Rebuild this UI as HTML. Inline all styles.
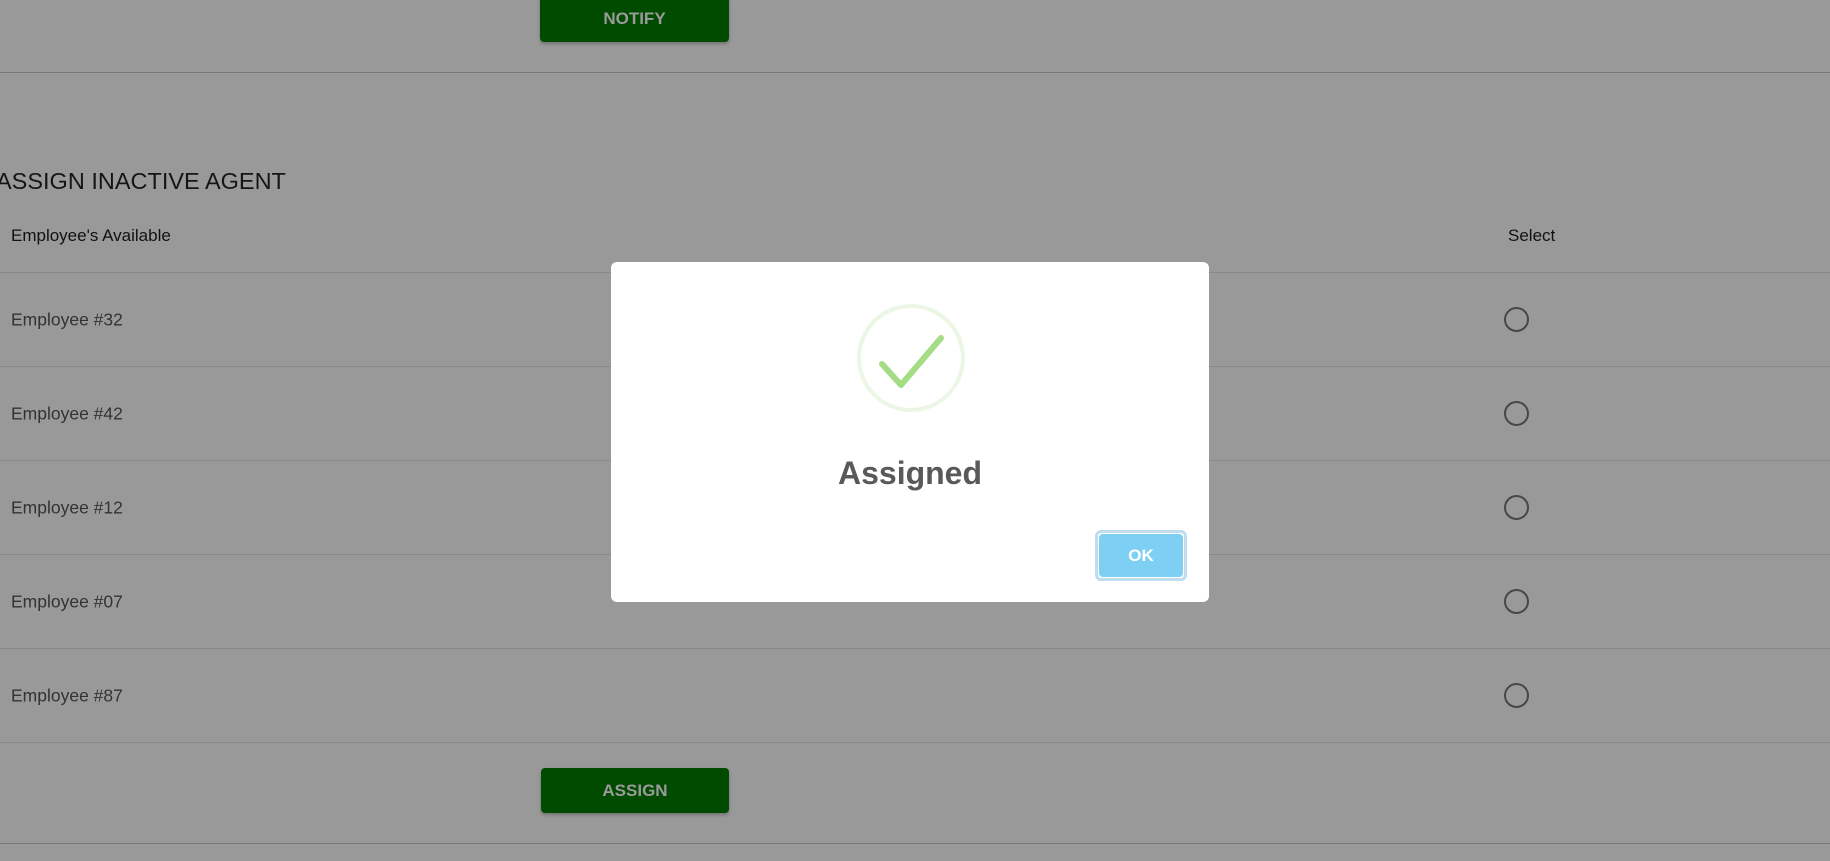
<!DOCTYPE html>
<html><head><meta charset="utf-8"><style>
*{margin:0;padding:0;box-sizing:border-box}
body{width:1830px;height:861px;overflow:hidden;background:#999;font-family:"Liberation Sans",Roboto,sans-serif;position:relative}
.abs{position:absolute}
.btn{background:#004b00;color:#9a9a9a;font-weight:bold;font-size:17px;display:flex;align-items:center;justify-content:center;border-radius:4px;box-shadow:0 2px 3px rgba(0,0,0,.25)}
.line{left:0;width:1830px;height:1px;background:#888}
.row{left:11px;font-size:17.5px;color:#333;transform:translateY(-50%)}
.radio{left:1504px;width:25px;height:25px;border:2.5px solid #474747;border-radius:50%}
</style></head><body>
<div class="abs btn" style="left:540px;top:-4px;width:189px;height:46px">NOTIFY</div>
<div class="abs" style="left:0;top:72px;width:1830px;height:1px;background:#777"></div>
<div class="abs" style="left:-4px;top:168px;font-size:23.5px;color:#151515">ASSIGN INACTIVE AGENT</div>
<div class="abs" style="left:11px;top:226px;font-size:17px;color:#111">Employee's Available</div>
<div class="abs" style="left:1508px;top:226px;font-size:17px;color:#111">Select</div>
<div class="abs line" style="top:272px"></div>
<div class="abs row" style="top:320px">Employee #32</div><div class="abs radio" style="top:307px"></div>
<div class="abs line" style="top:366px"></div>
<div class="abs row" style="top:414px">Employee #42</div><div class="abs radio" style="top:401px"></div>
<div class="abs line" style="top:460px"></div>
<div class="abs row" style="top:508px">Employee #12</div><div class="abs radio" style="top:495px"></div>
<div class="abs line" style="top:554px"></div>
<div class="abs row" style="top:602px">Employee #07</div><div class="abs radio" style="top:589px"></div>
<div class="abs line" style="top:648px"></div>
<div class="abs row" style="top:696px">Employee #87</div><div class="abs radio" style="top:683px"></div>
<div class="abs line" style="top:742px"></div>
<div class="abs btn" style="left:541px;top:768px;width:188px;height:45px">ASSIGN</div>
<div class="abs" style="left:0;top:843px;width:1830px;height:1px;background:#777"></div>

<div class="abs" style="left:611px;top:262px;width:598px;height:340px;background:#fff;border-radius:6px">
<svg class="abs" style="left:245px;top:40px" width="110" height="112" viewBox="0 0 110 112">
<circle cx="55" cy="56" r="52" fill="none" stroke="#ebf6e4" stroke-width="4"/>
<path d="M25 63 L46 77 M46 77 L85 35" fill="none" stroke="#a5dc86" stroke-width="0"/>
<path d="M26 62 L45 83 L85 36" fill="none" stroke="#a5dc86" stroke-width="6" stroke-linecap="round" stroke-linejoin="round"/>
</svg>
<div class="abs" style="left:0;width:598px;top:193px;text-align:center;font-size:32px;font-weight:bold;color:#595959">Assigned</div>
<div class="abs" style="left:484px;top:268px;width:92px;height:51px;border-radius:6px;border:3px solid #c0dcef;padding:1px">
<div style="width:100%;height:100%;background:#7ecff4;border-radius:4px;color:#fff;font-weight:bold;font-size:17px;display:flex;align-items:center;justify-content:center">OK</div>
</div>
</div>
</body></html>
